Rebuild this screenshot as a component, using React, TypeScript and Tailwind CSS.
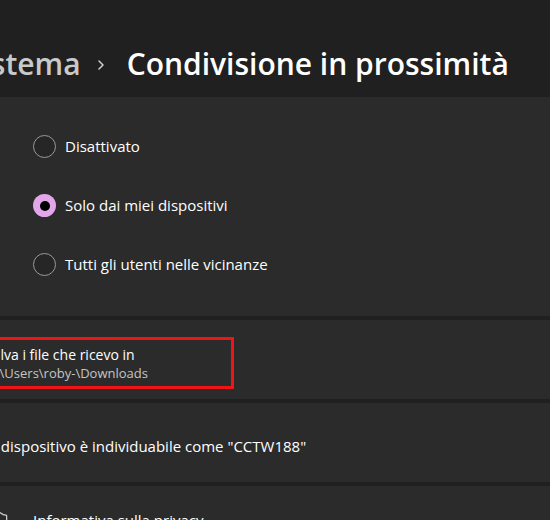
import { Shield } from "lucide-react";

// Radio row used in the first panel
function Radio({ label, checked }: { label: string; checked?: boolean }) {
  return (
    <div className="flex h-[59px] items-center">
      {checked ? (
        <div className="flex h-[23px] w-[23px] items-center justify-center rounded-full bg-[#e4a6ea]">
          <div className="h-[10px] w-[10px] rounded-full bg-black" />
        </div>
      ) : (
        <div className="h-[23px] w-[23px] rounded-full border-[1.5px] border-[#9a9a9a] bg-[#262626]" />
      )}
      <span className="ml-[9px] text-[15px] text-white">{label}</span>
    </div>
  );
}

export default function App() {
  return (
    <div
      className="relative h-[520px] w-[550px] overflow-hidden bg-[#202020]"
      style={{ fontFamily: '"Open Sans", "Noto Sans", sans-serif' }}
    >
      {/* HEADER / BREADCRUMB */}
      <div className="flex h-[97px] items-center pt-[30px] -ml-[34px] whitespace-nowrap">
        <span className="text-[30px] font-semibold text-[#c9c9c9]">Sistema</span>
        <svg width="10" height="14" viewBox="0 0 10 14" className="ml-[15px] mr-[21px] mt-[2px]">
          <path d="M3 3 L7 7 L3 11" fill="none" stroke="#d0d0d0" strokeWidth="1.5" strokeLinecap="round" strokeLinejoin="round" />
        </svg>
        <span className="text-[30px] font-semibold text-white">Condivisione in prossimità</span>
      </div>

      <div className="flex flex-col gap-[4px]">
        {/* RADIO PANEL */}
        <div className="h-[219px] bg-[#2b2b2b] pl-[33px] pt-[20px]">
          <Radio label="Disattivato" />
          <Radio label="Solo dai miei dispositivi" checked />
          <Radio label="Tutti gli utenti nelle vicinanze" />
        </div>

        {/* SAVE LOCATION */}
        <div className="relative flex h-[79px] flex-col justify-center bg-[#2b2b2b] pt-[8px] whitespace-nowrap">
          <div className="-ml-[15px] text-[14px] leading-[19px] text-white">Salva i file che ricevo in</div>
          <div className="-ml-[12px] text-[13px] leading-[19px] text-[#c5c5c5]">C:\Users\roby-\Downloads</div>
          <div className="absolute -left-[10px] top-[17px] h-[52px] w-[244px] border-[3px] border-[#f01414]" />
        </div>

        {/* DEVICE NAME */}
        <div className="flex h-[79px] items-center bg-[#2b2b2b] pt-[7px] whitespace-nowrap">
          <span className="-ml-[11px] text-[15px] text-white">Il dispositivo è individuabile come "CCTW188"</span>
        </div>

        {/* PRIVACY */}
        <div className="flex h-[79px] items-start bg-[#2b2b2b] pt-[23px] whitespace-nowrap">
          <Shield size={20} strokeWidth={1.5} className="-ml-[10px] mt-[2px] text-[#d0d0d0]" />
          <span className="ml-[23px] text-[15px] text-white">Informativa sulla privacy</span>
        </div>
      </div>
    </div>
  );
}
